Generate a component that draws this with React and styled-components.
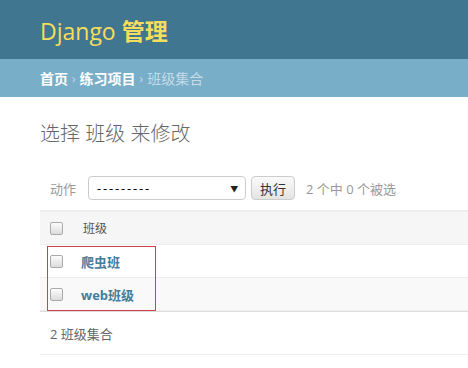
import React from 'react'
import styled, { createGlobalStyle } from 'styled-components'

const Global = createGlobalStyle`
  html, body {
    margin: 0;
    padding: 0;
    background: #fff;
  }
  body {
    font-family: "Open Sans", "Noto Sans CJK SC", sans-serif;
    color: #333;
    font-size: 13px;
    overflow: hidden;
  }
`

const Header = styled.div`
  height: 59px;
  box-sizing: border-box;
  background: #417690;
  padding: 0 40px;
  display: flex;
  align-items: center;
`

const Branding = styled.h1`
  margin: 0;
  font-size: 23px;
  font-weight: 400;
  color: #f5dd5d;

  & b {
    font-weight: 700;
  }
`

const Crumbs = styled.div`
  height: 38px;
  box-sizing: border-box;
  background: #79aec8;
  padding: 0 40px;
  display: flex;
  align-items: center;
  font-size: 14px;
  color: #c4dce8;
`

const Crumb = styled.a`
  color: #fff;
  font-weight: 700;
  text-decoration: none;
`

const Sep = styled.span`
  margin: 0 4px;
  font-size: 12px;
`

const Content = styled.div`
  padding: 20px 0 0 40px;
`

const Title = styled.h1`
  margin: 1px 0 0;
  font-size: 20px;
  font-weight: 300;
  color: #666;
`

const Actions = styled.div`
  display: flex;
  align-items: center;
  height: 44px;
  margin-top: 19px;
  padding-left: 10px;
  border-bottom: 1px solid #eee;
  font-size: 13px;
  color: #999;
`

const Label = styled.span`
  margin-right: 12px;
`

const Select = styled.div`
  width: 158px;
  height: 24px;
  box-sizing: border-box;
  border: 1px solid #ccc;
  border-radius: 4px;
  display: flex;
  align-items: center;
  justify-content: space-between;
  padding: 0 5px 0 8px;
  color: #000;
  font-size: 13px;
  letter-spacing: 1.8px;
`

const Arrow = styled.span`
  font-size: 8px;
  color: #222;
`

const Go = styled.button`
  margin-left: 5px;
  height: 24px;
  padding: 0 8px;
  border: 1px solid #ccc;
  border-radius: 4px;
  background: linear-gradient(#fafafa, #e4e4e4);
  font-family: inherit;
  font-size: 13px;
  color: #333;
`

const Counter = styled.span`
  margin-left: 11px;
  color: #999;
`

const Table = styled.div`
  position: relative;
  border-top: 1px solid #eee;
`

const Row = styled.div`
  display: flex;
  align-items: center;
  height: 33px;
  box-sizing: border-box;
  border-bottom: 1px solid #eee;
  background: ${p => p.$bg};
`

const Check = styled.span`
  width: 11px;
  height: 11px;
  margin: 0 18px 0 10px;
  border: 1px solid #aaa;
  border-radius: 2px;
  background: linear-gradient(#fcfcfc, #dcdcdc);
  flex: none;
`

const HeadLabel = styled.span`
  font-size: 12px;
  font-weight: 400;
  color: #555;
  margin-left: 2px;
`

const Link = styled.a`
  font-size: 13px;
  font-weight: 700;
  color: #447e9b;
  text-decoration: none;
`

const Mark = styled.div`
  position: absolute;
  left: 7px;
  top: 34px;
  width: 109px;
  height: 65px;
  box-sizing: border-box;
  border: 1px solid #d33f4f;
  pointer-events: none;
`

const Footer = styled.div`
  height: 42px;
  display: flex;
  align-items: center;
  padding-left: 10px;
  border-top: 1px solid #ddd;
  border-bottom: 1px solid #eee;
  color: #666;
  font-size: 13px;
`

const App = () => (
  <>
    <Global />
    <Header>
      <Branding>Django <b>管理</b></Branding>
    </Header>
    <Crumbs>
      <Crumb>首页</Crumb>
      <Sep>›</Sep>
      <Crumb>练习项目</Crumb>
      <Sep>›</Sep>
      班级集合
    </Crumbs>
    <Content>
      <Title>选择 班级 来修改</Title>
      <Actions>
        <Label>动作</Label>
        <Select>
          ---------
          <Arrow>▼</Arrow>
        </Select>
        <Go>执行</Go>
        <Counter>2 个中 0 个被选</Counter>
      </Actions>
      <Table>
        <Row $bg="#f6f6f6">
          <Check />
          <HeadLabel>班级</HeadLabel>
        </Row>
        <Row $bg="#fff">
          <Check />
          <Link>爬虫班</Link>
        </Row>
        <Row $bg="#f9f9f9">
          <Check />
          <Link>web班级</Link>
        </Row>
        <Mark />
      </Table>
      <Footer>2 班级集合</Footer>
    </Content>
  </>
)

export default App
